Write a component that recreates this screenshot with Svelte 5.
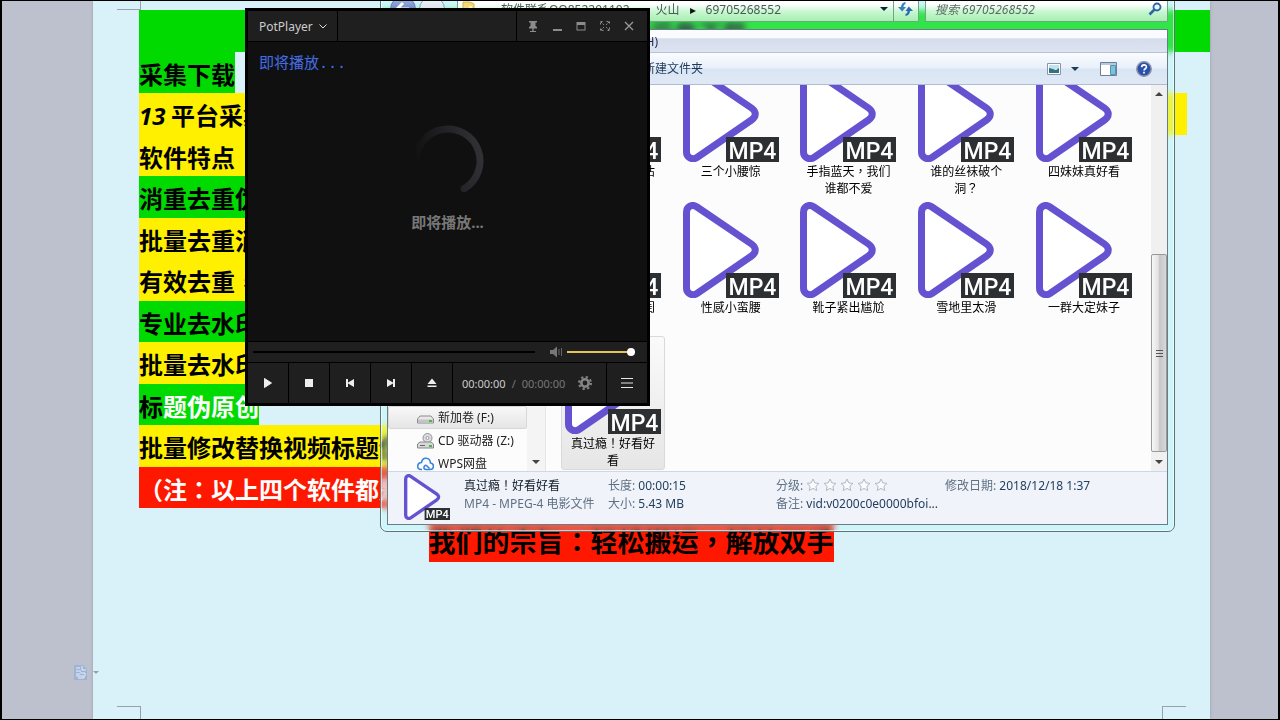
<script lang="ts">
  type Line = { text: string; lead?: string; tone: string; size?: string };

  const lines: Line[] = [
    { text: "软件采集下载", tone: "green", size: "title" },
    { text: "采集下载", tone: "green", size: "fit" },
    { text: " 平台采集", lead: "13", tone: "yellow" },
    { text: "软件特点", tone: "yellow", size: "half" },
    { text: "消重去重伪", tone: "green", size: "half" },
    { text: "批量去重消", tone: "yellow", size: "half" },
    { text: "有效去重，", tone: "yellow", size: "half" },
    { text: "专业去水印", tone: "green", size: "half" },
    { text: "批量去水印", tone: "yellow", size: "half" },
    { text: "题伪原创", lead: "标", tone: "green inverse", size: "fit" },
    { text: "批量修改替换视频标题伪", tone: "yellow", size: "fit" },
    { text: "（注：以上四个软件都是", tone: "red", size: "fit" },
  ];

  const files = [
    "真好看的小妹估", "三个小腰惊", "手指蓝天，我们谁都不爱", "谁的丝袜破个洞？", "四妹妹真好看",
    "真好看的小妹闺", "性感小蛮腰", "靴子紧出尴尬", "雪地里太滑", "一群大定妹子",
    "真过瘾！好看好看",
  ];

  let selected = $state(10);
  let seek = $state(0);
  let volume = $state(100);
  let search = $state("");
</script>

{#snippet mp4()}
  <svg class="mp4" viewBox="0 0 96 96" aria-hidden="true">
    <path
      d="M3.5 10.5V86C3.5 91.500 9 94.500 14 91.500L68.500 54C73.500 50.500 73.500 45.500 68.500 42L14 5C9 1.500 3.500 4.500 3.500 10.500Z"
      fill="#fff" stroke="#6552d0" stroke-width="7"
    />
    <rect x="43" y="71" width="53" height="25" fill="#2d3032" />
    <text x="69.500" y="92.500" text-anchor="middle" fill="#fff">MP4</text>
  </svg>
{/snippet}

{#snippet caret()}
  <svg class="caret" viewBox="0 0 8 4" aria-hidden="true"><path d="M0 0h8L4 4z" fill="currentColor" /></svg>
{/snippet}

<div class="desktop">
  <main class="page">
    <i class="mark top-left"></i>
    <i class="mark bottom-left"></i>
    <i class="mark bottom-right"></i>
    <div class="lines">
      {#each lines as line}
        <p class="line {line.tone} {line.size ?? ''}">
          {#if line.lead}<span class="lead" class:number={line.lead === "13"}>{line.lead}</span>{/if}{line.text}
        </p>
      {/each}
    </div>
    <p class="motto"><span>我们的宗旨：轻松搬运，解放双手</span></p>
    <button class="paste" aria-label="粘贴选项">
      <svg width="13" height="15" viewBox="0 0 13 15">
        <path d="M0 0h9l4 4v11H0z" fill="#9fb3d6" />
        <path d="M2 3h4M2 6h5M2 9h4M8 1v4h4M2 11h8v2H4M6 8h5v3" fill="none" stroke="#e8f0fb" />
      </svg>
      {@render caret()}
    </button>
  </main>

  <section class="explorer">
    <header class="address-row">
      <button class="round blue" aria-label="后退">
        <svg width="16" height="16" viewBox="0 0 16 16"><path d="M8 2L2 8l6 6M2 8h12" fill="none" stroke="#fff" stroke-width="3" /></svg>
      </button>
      <button class="round" aria-label="前进"></button>
      <div class="address">
        <svg width="13" height="16" viewBox="0 0 13 16"><path d="M1 1h7l4 2v12H1z" fill="#f3d77c" stroke="#d6b04d" /><path d="M7 5h3v9H7z" fill="#fff3b8" /></svg>
        <span class="chevrons">«</span>
        <a href="#root">软件联系QQ852201102</a>
        <span class="step">▸</span>
        <a href="#volcano">火山</a>
        <span class="step">▸</span>
        <a href="#current">69705268552</a>
        <button class="drop" aria-label="以前的位置">{@render caret()}</button>
      </div>
      <button class="refresh" aria-label="刷新">
        <svg width="15" height="14" viewBox="0 0 15 14">
          <path d="M7.500 0C5 .5 3.200 2 3 5H0l4.200 4.500L8 5H5.500C5.500 3.500 6 2.500 7.500 2z" fill="#3c80c2" />
          <path d="M7.500 14c2.500-.5 4.300-2 4.500-5h3l-4.200-4.500L7.500 9H9.500c0 1.500-.5 2.500-2 3z" fill="#2c69b4" />
        </svg>
      </button>
      <label class="search">
        <input type="text" bind:value={search} placeholder="搜索 69705268552" aria-label="搜索" />
        <svg width="14" height="14" viewBox="0 0 14 14"><circle cx="9" cy="5" r="3.500" fill="#e9f6ff" stroke="#3065a8" stroke-width="1.800" /><path d="M6.500 7.500L1.500 12.500" stroke="#3065a8" stroke-width="2.600" /></svg>
      </label>
    </header>

    <div class="client">
      <nav class="menu"><button>帮助(H)</button></nav>
      <div class="toolbar">
        <button class="new-folder">新建文件夹</button>
        <button class="tool view" aria-label="更改您的视图">
          <svg width="14" height="12" viewBox="0 0 14 12"><path d="M.5.5h13v11H.5z" fill="#fff" stroke="#8a95a8" /><path d="M2 2h10v4H2z" fill="#bfe3f5" /><path d="M2 5l4 1 3 1 3-2v5H2z" fill="#2f7280" /></svg>
          {@render caret()}
        </button>
        <button class="tool" aria-label="预览窗格">
          <svg width="17" height="14" viewBox="0 0 17 14"><path d="M.5.5h16v13H.5z" fill="#fff" stroke="#6d7f98" /><path d="M1 1h15v2H1z" fill="#b9c8dc" /><path d="M10.500 3.500h5v9h-5z" fill="#7cc2df" stroke="#5592b4" /></svg>
        </button>
        <button class="tool" aria-label="获取帮助">
          <svg width="16" height="16" viewBox="0 0 16 16"><circle cx="8" cy="8" r="7.200" fill="#2951ac" stroke="#8c94a8" stroke-width="1.500" /><path d="M5.700 6.200c0-3 4.700-3 4.700-.3 0 1.800-2.300 1.800-2.300 3.500M8 10.700v1.800" fill="none" stroke="#fff" stroke-width="1.700" /></svg>
        </button>
      </div>

      <div class="panes">
        <aside class="tree">
          <ul>
            <li class="hot">
              <svg width="17" height="14" viewBox="0 0 17 14"><path d="M3 5h11l2.500 3v4H.5V8z" fill="#e8e8e8" stroke="#8d8d8d" /><path d="M1 8.500h15v3H1z" fill="#c4c4c4" /><path d="M12 10h3" stroke="#49b849" stroke-width="2" /></svg>
              新加卷 (F:)
            </li>
            <li>
              <svg width="17" height="16" viewBox="0 0 17 16"><circle cx="10.500" cy="5" r="4.500" fill="#dcdfe2" stroke="#8d9297" /><circle cx="10.500" cy="5" r="1.500" fill="#fff" stroke="#999" /><path d="M3 9h11l2.500 2v4H.5v-4z" fill="#d8d8d8" stroke="#888" /><path d="M3 12.500h5" stroke="#666" /><path d="M12 13h3" stroke="#49b849" stroke-width="2" /></svg>
              CD 驱动器 (Z:)
            </li>
            <li>
              <svg width="17" height="14" viewBox="0 0 17 14"><path d="M9.500 8.500C7 7.500 5.500 12.500 9 12.500h4c4.500 0 4.500-6 .5-6.500C13 0 5.500-.5 4.500 5.500c-5 .5-5 7-.5 7h1M9.500 8.500l3 3" fill="none" stroke="#3a85d8" stroke-width="1.600" /></svg>
              WPS网盘
            </li>
          </ul>
          <div class="tree-bar">{@render caret()}</div>
        </aside>

        <div class="files">
          {#each files as name, i}
            <button class="file" class:selected={selected === i} onclick={() => (selected = i)}>
              {@render mp4()}
              <span>{name}</span>
            </button>
          {/each}
        </div>

        <div class="scrollbar">
          <span class="arrow up">{@render caret()}</span>
          <span class="thumb"><i></i><i></i><i></i></span>
          <span class="arrow">{@render caret()}</span>
        </div>
      </div>

      <footer class="details">
        {@render mp4()}
        <div class="facts">
          <strong>真过瘾！好看好看</strong>
          <span>长度: <b>00:00:15</b></span>
          <span class="rating">
            分级:
            {#each [1, 2, 3, 4, 5] as _}
              <svg width="14" height="14" viewBox="0 0 14 14"><path d="M7 1l1.800 3.900 4.200.5-3.100 2.900.8 4.200L7 10.400l-3.700 2.100.8-4.200L1 5.400l4.200-.5z" fill="#fafbfd" stroke="#b4b8bf" /></svg>
            {/each}
          </span>
          <span>修改日期: <b>2018/12/18 1:37</b></span>
          <span>MP4 - MPEG-4 电影文件</span>
          <span>大小: <b>5.43 MB</b></span>
          <span>备注: <b>vid:v0200c0e0000bfoi...</b></span>
        </div>
      </footer>
    </div>
  </section>

  <section class="player">
    <header class="titlebar">
      <button class="brand">
        PotPlayer
        <svg class="chevron" viewBox="0 0 8 5"><path d="M.5.5L4 4 7.500.5" fill="none" stroke="#ddd" /></svg>
      </button>
      <div class="window-buttons">
        <button aria-label="置顶"><svg viewBox="0 0 12 12"><path d="M2 1h8v1.500H8.500V6L10 7v1.500H6.700V11H9v1H3v-1h2.300V8.500H2V7l1.500-1V2.500H2z" /></svg></button>
        <button aria-label="最小化"><svg viewBox="0 0 12 12"><path d="M2 9h9v2H2z" /></svg></button>
        <button aria-label="最大化"><svg viewBox="0 0 12 12"><path d="M1.500 2h9v8.500h-9zM2.500 5v4.500h7V5z" fill-rule="evenodd" /></svg></button>
        <button aria-label="全屏"><svg viewBox="0 0 12 12"><path d="M1.500 4.500v-3h3M7.500 1.500h3v3M10.500 7.500v3h-3M4.500 10.500h-3v-3M2 2l3 3M10 2L7 5M10 10L7 7M2 10l3-3" fill="none" stroke="#8c8c8c" stroke-dasharray="2 1" /></svg></button>
        <button aria-label="关闭"><svg viewBox="0 0 12 12"><path d="M2 2l8 8M10 2l-8 8" stroke="#999" stroke-width="1.300" /></svg></button>
      </div>
    </header>

    <div class="video">
      <p class="osd">即将播放...</p>
      <div class="loading">
        <svg width="72" height="72" viewBox="0 0 72 72" aria-hidden="true">
          <defs>
            <linearGradient id="fade" x1="0" y1=".6" x2="1" y2=".4">
              <stop offset="0" stop-color="#101010" />
              <stop offset=".6" stop-color="#242428" />
              <stop offset="1" stop-color="#303035" />
            </linearGradient>
          </defs>
          <path d="M4 36A32 32 0 1 1 52 63.700" fill="none" stroke="url(#fade)" stroke-width="7" stroke-linecap="round" />
        </svg>
        <span>即将播放...</span>
      </div>
    </div>

    <div class="sliders">
      <input class="seek" type="range" bind:value={seek} aria-label="进度" />
      <svg width="13" height="12" viewBox="0 0 13 12" aria-hidden="true"><path d="M0 4h3l4-3.500v11L3 8H0z" fill="#777" /><path d="M9 3v6M11.500 2v8" stroke="#666" /></svg>
      <input class="volume" type="range" bind:value={volume} aria-label="音量" />
    </div>

    <div class="controls">
      <button aria-label="播放"><svg viewBox="0 0 12 12"><path d="M2.500 1.500l7 4.500-7 4.500z" stroke-linejoin="round" stroke="#eee" /></svg></button>
      <button aria-label="停止"><svg viewBox="0 0 12 12"><path d="M2 2h8v8H2z" /></svg></button>
      <button aria-label="上一个"><svg viewBox="0 0 12 12"><path d="M2 2h2v3.500L10 2v8L4 6.500V10H2z" /></svg></button>
      <button aria-label="下一个"><svg viewBox="0 0 12 12"><path d="M10 2H8v3.500L2 2v8l6-3.500V10h2z" /></svg></button>
      <button aria-label="打开"><svg viewBox="0 0 12 12"><path d="M6 1.500l4.500 5.500h-9zM1.500 8.500h9V10h-9z" /></svg></button>
      <div class="time">
        <span>00:00:00</span><em>/</em><em>00:00:00</em>
        <button class="gear" aria-label="设置">
          <svg viewBox="0 0 14 14">
            <circle cx="7" cy="7" r="3.700" fill="none" stroke="#858585" stroke-width="2.600" />
            <circle cx="7" cy="7" r="6" fill="none" stroke="#858585" stroke-width="2" stroke-dasharray="2.300 2.412" />
          </svg>
        </button>
      </div>
      <button aria-label="播放列表"><svg viewBox="0 0 12 12"><path d="M0 1.500h12M0 6h12M0 10.500h12" stroke="#e6e6e6" /></svg></button>
    </div>
  </section>
</div>

<style>
  :global(body) {
    margin: 0;
  }
  .desktop {
    position: relative;
    box-sizing: border-box;
    height: 100vh;
    min-height: 600px;
    overflow: hidden;
    padding: 0 68px 0 91px;
    border: solid #000;
    border-width: 1px 2px;
    background: #bdc0cd;
    color: #000;
    font: 12px/17px "Noto Sans", "Noto Sans CJK TC", sans-serif;
  }
  button {
    margin: 0;
    padding: 0;
    border: 0;
    background: none;
    color: inherit;
    font: inherit;
  }
  a {
    color: inherit;
    text-decoration: none;
  }
  p, ul {
    margin: 0;
    padding: 0;
    list-style: none;
  }
  svg {
    flex: none;
    display: block;
  }
  .caret {
    width: 8px;
    height: 4px;
  }

  /* document */
  .page {
    position: relative;
    box-sizing: border-box;
    height: 100%;
    padding: 9px 23px 0 46px;
    background: #d9f1f8;
    box-shadow: 0 0 3px #9a9eac;
  }
  .mark {
    position: absolute;
    width: 23px;
    height: 12px;
    border: 0 solid #98a2aa;
  }
  .top-left {
    top: 0;
    left: 24px;
    height: 8px;
    border-width: 0 1px 1px 0;
  }
  .bottom-left {
    bottom: 0;
    left: 24px;
    border-width: 1px 1px 0 0;
  }
  .bottom-right {
    bottom: 0;
    right: 24px;
    border-width: 1px 0 0 1px;
  }
  .lines {
    display: grid;
    grid-template-rows: repeat(12, minmax(0, 1fr));
    height: 498px;
    font-size: 24px;
    font-weight: 700;
  }
  .line {
    line-height: 44px;
    white-space: pre;
    font-family: "Noto Sans CJK TC", sans-serif;
  }
  .number {
    font-family: "Open Sans", sans-serif;
    font-style: italic;
  }
  .green { background: #00da00; }
  .yellow { background: #fff000; }
  .red { background: #ff1800; color: #fff; }
  .inverse { color: #fff; }
  .inverse .lead { color: #000; }
  .title {
    margin-right: -23px;
    text-align: center;
  }
  .fit { justify-self: start; }
  .half { width: 50%; }
  .motto {
    display: flex;
    justify-content: center;
    margin-top: 12px;
    padding-right: 64px;
    font: 700 27px/42px "Noto Sans CJK TC", sans-serif;
  }
  .motto span {
    background: #ff1800;
    height: 42px;
  }
  .paste {
    position: absolute;
    left: -19px;
    bottom: 39px;
    display: flex;
    align-items: center;
    gap: 6px;
    color: #8fa5ab;
  }
  .paste .caret {
    width: 6px;
    height: 3px;
  }

  /* file explorer */
  .explorer {
    position: absolute;
    top: -31px;
    left: 378px;
    right: 103px;
    padding: 0 6px 6px;
    border: 1px solid #5c7579;
    border-radius: 7px;
    background: rgba(175, 255, 255, 0.28);
    box-shadow: inset 0 0 0 1px rgba(255, 255, 255, 0.6);
    backdrop-filter: blur(3px);
  }
  .address-row {
    display: flex;
    align-items: flex-end;
    height: 51px;
    padding-bottom: 7px;
    color: #4b5a55;
  }
  .round {
    width: 26px;
    height: 26px;
    margin-left: 3px;
    border: 1px solid #8c9db0;
    border-radius: 50%;
    background: linear-gradient(#f2f8fb, #b9cfd8);
  }
  .blue {
    display: grid;
    place-items: center;
    border-color: #6b7ea5;
    background: linear-gradient(#a8bbe4, #3558a8);
  }
  .address, .refresh, .search {
    box-sizing: border-box;
    height: 26px;
    border: 1px solid #6fa585;
    background: linear-gradient(#fff 30%, #c9f7d2 60%, #a6efb0);
  }
  .address {
    flex: 1;
    display: flex;
    align-items: center;
    margin-left: 12px;
    padding-left: 4px;
  }
  .chevrons {
    width: 18px;
    margin-left: 8px;
  }
  .step {
    width: 26px;
    color: #111;
    text-align: center;
  }
  .drop {
    margin-left: auto;
    padding: 4px 5px;
    color: #0e2433;
  }
  .refresh {
    width: 25px;
    padding: 0 4px;
    border-left: 0;
  }
  .search {
    display: flex;
    align-items: center;
    width: 243px;
    margin-left: 6px;
    padding: 0 5px 0 9px;
  }
  .search input {
    flex: 1;
    min-width: 0;
    padding: 0;
    border: 0;
    outline: 0;
    background: none;
    color: #333;
    font: inherit;
    font-style: italic;
  }
  .search input::placeholder {
    color: #5c6b63;
  }
  .client {
    border: 1px solid #6b7d84;
    background: #fcfcfc;
  }
  .menu {
    box-sizing: border-box;
    display: flex;
    justify-content: flex-end;
    height: 23px;
    padding-right: calc(100% - 270px);
    border-bottom: 1px solid #b8c2d6;
    background: linear-gradient(#fafbfe 35%, #d5dcec 40%, #dde3f0);
    color: #1c2c4d;
  }
  .toolbar {
    box-sizing: border-box;
    display: flex;
    align-items: center;
    height: 32px;
    padding: 0 15px 0 255px;
    border-bottom: 1px solid #aebdd2;
    background: linear-gradient(#fafcff, #e8f0fa 48%, #dae5f3 52%, #dfe9f6);
    color: #1e395b;
  }
  .new-folder { margin-right: auto; }
  .tool { margin-left: 19px; }
  .view {
    display: flex;
    align-items: center;
    gap: 10px;
    margin-right: 2px;
  }
  .panes {
    display: flex;
    height: 386px;
    overflow: hidden;
  }
  .tree {
    box-sizing: border-box;
    display: flex;
    flex: none;
    width: 158px;
    border-right: 1px solid #e4e6ea;
    color: #222;
  }
  .tree ul {
    align-self: flex-end;
    flex: 1;
    margin-bottom: -4px;
  }
  .tree li {
    box-sizing: border-box;
    display: flex;
    align-items: center;
    gap: 4px;
    height: 23px;
    padding-left: 28px;
    border: 1px solid transparent;
    border-radius: 2px;
  }
  .tree .hot {
    border-color: #d8d8d8;
    background: linear-gradient(#f8f8f8, #e5e5e5);
  }
  .tree-bar {
    display: flex;
    align-items: flex-end;
    padding: 0 5px 7px;
    background: #f4f4f5;
    color: #444;
  }
  .files {
    flex: 1;
    display: grid;
    grid-template-columns: repeat(5, 1fr);
    grid-auto-rows: 134px;
    gap: 2px 0;
    justify-items: center;
    margin-top: -21px;
    padding: 0 8px;
  }
  .file {
    box-sizing: border-box;
    display: flex;
    flex-direction: column;
    align-items: center;
    gap: 1px;
    width: 104px;
    padding-top: 1px;
    border: 1px solid transparent;
    border-radius: 3px;
  }
  .selected {
    border-color: #d9d9d9;
    background: linear-gradient(#fafafa, #e6e6e6);
  }
  .mp4 {
    width: 96px;
    height: 96px;
  }
  .mp4 text {
    font: 500 23px Roboto, sans-serif;
  }
  .file span {
    width: 88px;
  }
  .scrollbar {
    display: flex;
    flex-direction: column;
    width: 16px;
    background: #f0f0f0;
    color: #444;
  }
  .arrow {
    display: grid;
    place-items: center;
    height: 19px;
  }
  .up {
    transform: rotate(180deg);
  }
  .thumb {
    box-sizing: border-box;
    display: flex;
    flex-direction: column;
    align-items: center;
    justify-content: center;
    gap: 2px;
    height: 198px;
    margin-top: auto;
    border: 1px solid #999;
    border-radius: 2px;
    background: linear-gradient(90deg, #f6f6f6, #e2e2e2 45%, #c6c6c8 55%, #d8d8d8);
  }
  .thumb i {
    width: 7px;
    height: 1px;
    background: #555;
  }
  .details {
    display: flex;
    height: 52px;
    padding-left: 16px;
    border-top: 1px solid #ccd8ea;
    background: #f0f4fa;
    color: #5f7084;
  }
  .details .mp4 {
    width: 46px;
    height: 46px;
    margin-top: 2px;
  }
  .facts {
    display: grid;
    grid-template-columns: 144px 168px 169px auto;
    grid-auto-rows: 18px;
    align-items: center;
    margin: 4px 0 0 14px;
    white-space: nowrap;
  }
  .facts b {
    color: #24405f;
    font-weight: 400;
  }
  .facts strong {
    color: #111c2b;
    font-weight: 400;
  }
  .rating {
    display: flex;
    align-items: center;
    gap: 3px;
  }

  /* media player */
  .player {
    position: absolute;
    top: 7px;
    left: 243px;
    display: flex;
    flex-direction: column;
    width: 399px;
    height: 392px;
    border: 3px solid #000;
    background: #1f1f1f;
    color: #ccc;
  }
  .player button svg {
    width: 12px;
    height: 12px;
    fill: #eee;
  }
  .titlebar {
    display: flex;
    justify-content: space-between;
    height: 30px;
    border-bottom: 1px solid #000;
  }
  .brand {
    display: flex;
    align-items: center;
    gap: 6px;
    padding: 0 10px 0 11px;
    border-right: 1px solid #000;
  }
  .player .brand .chevron {
    width: 8px;
    height: 5px;
  }
  .window-buttons {
    display: flex;
    align-items: center;
    gap: 12px;
    padding: 0 12px 0 10px;
    border-left: 1px solid #000;
  }
  .player .window-buttons svg {
    fill: #8c8c8c;
  }
  .video {
    flex: 1;
    padding: 13px 11px 0;
    background: #101010;
  }
  .osd {
    color: #4a6cd0;
    font: 15px/20px "Liberation Mono", "Noto Sans CJK TC", monospace;
    text-shadow: 0 0 2px #0b1d66;
  }
  .loading {
    display: flex;
    flex-direction: column;
    align-items: center;
    gap: 14px;
    margin-top: 50px;
    color: #777;
    font-size: 15px;
    font-weight: 700;
    line-height: 22px;
    font-family: "Noto Sans", "Noto Sans CJK SC", sans-serif;
  }
  .sliders {
    display: flex;
    align-items: center;
    height: 20px;
    padding: 0 12px 0 5px;
    border-top: 1px solid #000;
    border-bottom: 1px solid #000;
  }
  .sliders input {
    appearance: none;
    height: 8px;
    margin: 0;
    background: linear-gradient(#000, #000) center / 100% 2px no-repeat;
  }
  .sliders .seek {
    flex: 1;
    margin-right: 15px;
  }
  .sliders .volume {
    width: 68px;
    margin-left: 4px;
    background-image: linear-gradient(#e6c650, #e6c650);
  }
  .sliders input::-webkit-slider-thumb {
    appearance: none;
    width: 8px;
    height: 8px;
    border-radius: 50%;
    background: #fff;
  }
  .sliders .seek::-webkit-slider-thumb {
    opacity: 0;
  }
  .controls {
    display: flex;
    height: 40px;
  }
  .controls > button {
    display: grid;
    place-items: center;
    width: 41px;
    border-right: 1px solid #000;
  }
  .controls > button:last-child {
    width: 40px;
    border: 0;
  }
  .time {
    flex: 1;
    display: flex;
    align-items: center;
    gap: 6px;
    padding-left: 9px;
    border-right: 1px solid #000;
    font-size: 11px;
  }
  .time em {
    color: #777;
    font-style: normal;
  }
  .controls .gear {
    margin-left: 7px;
  }
  .player .gear svg {
    width: 14px;
    height: 14px;
  }
</style>
